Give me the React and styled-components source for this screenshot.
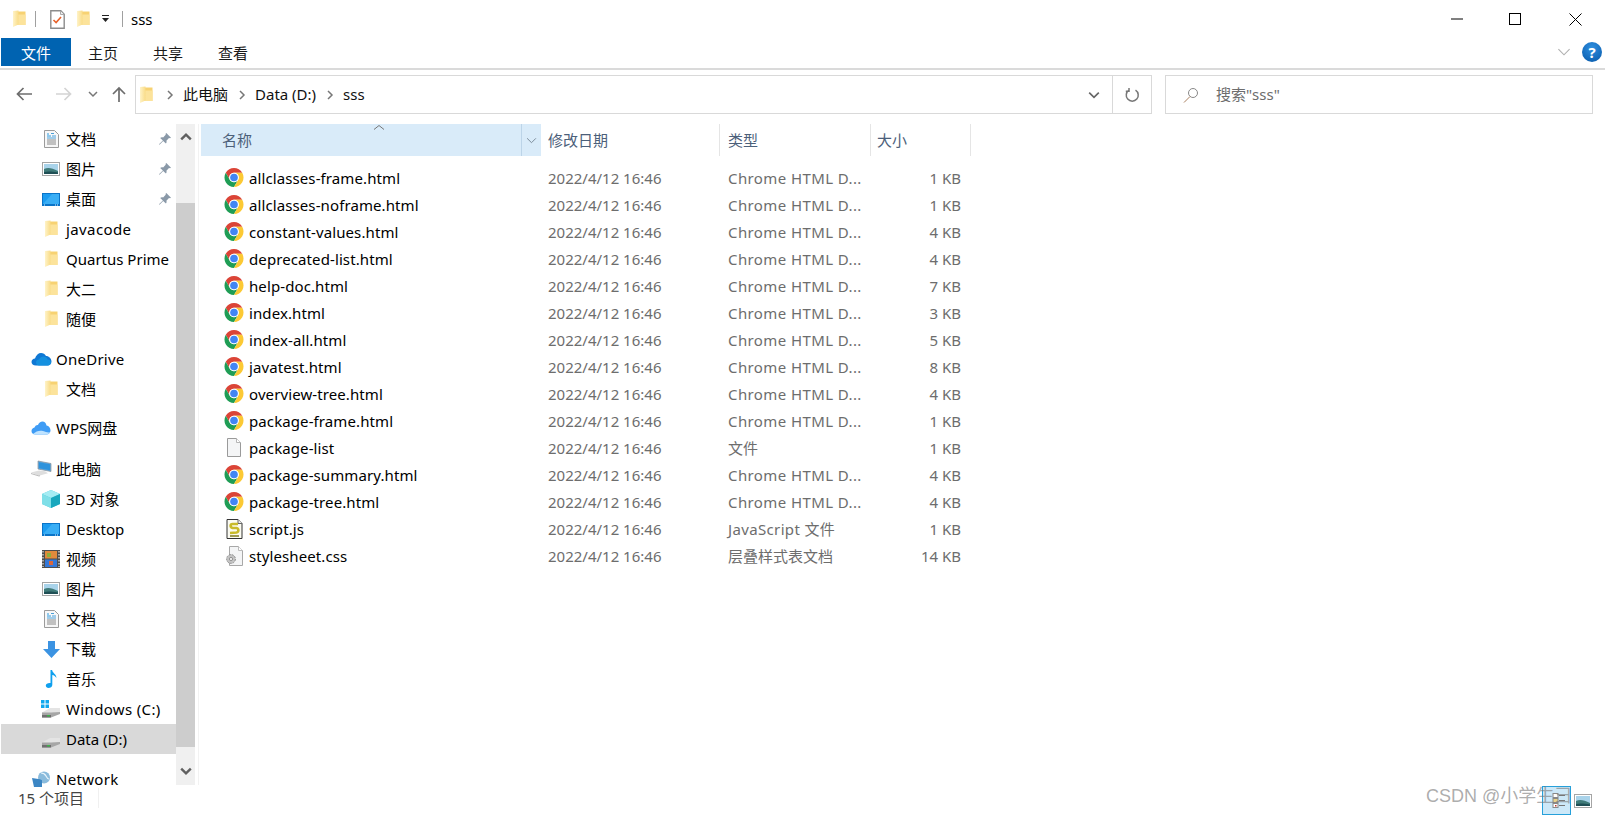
import React from "react";
import styled, { createGlobalStyle } from "styled-components";

const Global = createGlobalStyle`
  html, body { margin: 0; padding: 0; background: #fff; overflow: hidden; }
  * { box-sizing: border-box; }
  body { font-family: "Noto Sans", "Noto Sans CJK SC", sans-serif; font-size: 15px; color: #000; }
`;

const Window = styled.div`
  position: relative;
  width: 1605px;
  height: 815px;
  display: flex;
  flex-direction: column;
  overflow: hidden;
  background: #fff;
`;

const TitleBar = styled.div`
  height: 38px;
  flex: none;
  display: flex;
  align-items: center;
  padding-left: 12px;
`;
const QuickSep = styled.div`
  width: 1px;
  height: 16px;
  background: #a0a0a0;
  margin: 0 ${(p) => p.$r}px 0 ${(p) => p.$l}px;
`;
const QuickSlot = styled.span`
  display: flex;
  margin: 0 ${(p) => p.$r}px 0 ${(p) => p.$l || 0}px;
`;
const TitleText = styled.span`
  font-size: 15px;
  line-height: 20px;
`;
const WinControls = styled.div`
  margin-left: auto;
  display: flex;
  height: 100%;
  align-items: center;
`;
const WinButton = styled.button`
  width: 59px;
  height: 38px;
  padding: 0 ${(p) => p.$nudge || 0}px 0 0;
  border: 0;
  background: none;
  display: flex;
  align-items: center;
  justify-content: center;
`;

const Ribbon = styled.div`
  height: 32px;
  flex: none;
  display: flex;
  align-items: flex-start;
  padding-left: 1px;
  border-bottom: 2px solid #dadada;
`;
const RibbonTab = styled.div`
  height: 28px;
  width: ${(p) => (p.$active ? 70 : 65)}px;
  background: ${(p) => (p.$active ? "#0063b1" : "transparent")};
  color: ${(p) => (p.$active ? "#fff" : "#1a1a1a")};
  padding-left: ${(p) => (p.$active ? 20 : 17)}px;
  line-height: 30px;
  font-size: 15px;
`;
const RibbonRight = styled.div`
  margin-left: auto;
  display: flex;
  align-items: center;
  gap: 11px;
  height: 28px;
  padding-right: 3px;
`;
const HelpBadge = styled.div`
  width: 20px;
  height: 20px;
  border-radius: 50%;
  background: radial-gradient(circle at 50% 30%, #2f8fe0, #0758a8);
  color: #fff;
  font-size: 15px;
  font-weight: 700;
  line-height: 20px;
  text-align: center;
`;

const NavBar = styled.div`
  height: 54px;
  flex: none;
  display: flex;
  align-items: flex-start;
  padding-top: 5px;
`;
const NavButtons = styled.div`
  width: 135px;
  height: 38px;
  flex: none;
  display: flex;
  align-items: center;
  padding-left: 16px;
`;
const NavSlot = styled.span`
  display: flex;
  margin: 0 ${(p) => p.$r || 0}px 0 ${(p) => p.$l || 0}px;
`;
const AddressBox = styled.div`
  width: 1017px;
  height: 39px;
  flex: none;
  border: 1px solid #d9d9d9;
  display: flex;
  align-items: center;
  padding-left: 3px;
`;
const Crumb = styled.span`
  margin: 0 0 2px 8px;
  line-height: 20px;
  color: #111;
`;
const AddressEnd = styled.div`
  margin-left: auto;
  height: 100%;
  display: flex;
  align-items: center;
`;
const RefreshCell = styled.div`
  width: 39px;
  height: 100%;
  margin-left: 12px;
  border-left: 1px solid #d9d9d9;
  display: flex;
  align-items: center;
  justify-content: center;
`;
const SearchBox = styled.div`
  width: 428px;
  height: 39px;
  flex: none;
  margin-left: 13px;
  border: 1px solid #d9d9d9;
  display: flex;
  align-items: center;
  padding-left: 17px;
  gap: 17px;
  color: #6d6d6d;
`;
const SearchText = styled.span`
  margin-bottom: 2px;
  line-height: 20px;
`;

const Main = styled.div`
  flex: 1;
  min-height: 0;
  display: flex;
`;
const NavPane = styled.div`
  width: 175px;
  margin-left: 1px;
  flex: none;
`;
const NavRow = styled.div`
  height: 30px;
  margin-top: ${(p) => p.$gap}px;
  display: flex;
  align-items: center;
  position: relative;
  background: ${(p) => (p.$selected ? "#d9d9d9" : "transparent")};
  color: #000;
  white-space: nowrap;
`;
const NavIcon = styled.span`
  width: 24px;
  height: 24px;
  flex: none;
  margin-left: ${(p) => (p.$level === 1 ? 28 : 38)}px;
  margin-right: 3px;
  display: flex;
  align-items: center;
  justify-content: center;
`;
const NavLabel = styled.span`
  line-height: 20px;
  letter-spacing: ${(p) => p.$spacing || 0}px;
`;
const PinSlot = styled.span`
  position: absolute;
  left: 157px;
  top: 8px;
  display: flex;
`;

const ScrollBar = styled.div`
  width: 19px;
  flex: none;
  background: #f0f0f0;
  display: flex;
  flex-direction: column;
`;
const ScrollButton = styled.div`
  height: ${(p) => p.$h}px;
  flex: none;
  display: flex;
  justify-content: center;
  align-items: ${(p) => (p.$top ? "flex-start" : "flex-end")};
  padding: ${(p) => (p.$top ? "7px 0 0" : "0 0 8px")};
`;
const ScrollThumb = styled.div`
  flex: 1;
  background: #cdcdcd;
`;
const PaneRule = styled.div`
  width: 1px;
  flex: none;
  margin-left: 3px;
  background: #f2f2f2;
`;

const FileArea = styled.div`
  flex: 1;
  min-width: 0;
  padding-left: 2px;
`;
const HeaderRow = styled.div`
  display: flex;
  height: 32px;
`;
const HeaderCell = styled.div`
  width: ${(p) => p.$w}px;
  height: 32px;
  flex: none;
  position: relative;
  padding-left: ${(p) => p.$pad}px;
  line-height: 32px;
  color: #4c607a;
  background: ${(p) => (p.$active ? "#d9ebf9" : "transparent")};
  border-right: 1px solid ${(p) => (p.$active ? "transparent" : "#e5e5e5")};
`;
const SortCaret = styled.span`
  position: absolute;
  left: 170px;
  top: 0;
  display: flex;
`;
const HeaderSplit = styled.div`
  position: absolute;
  left: 320px;
  top: 0;
  bottom: 0;
  width: 20px;
  border-left: 1px solid #bcd4e8;
  display: flex;
  align-items: center;
  justify-content: center;
`;
const FileList = styled.div`
  padding-top: 8px;
`;
const FileRow = styled.div`
  display: flex;
  height: 27px;
  align-items: center;
  white-space: nowrap;
`;
const FileIcon = styled.span`
  width: 20px;
  height: 20px;
  flex: none;
  margin-left: 23px;
  display: flex;
  align-items: center;
  justify-content: center;
`;
const FileName = styled.span`
  width: 299px;
  flex: none;
  margin-left: 5px;
  color: #000;
  letter-spacing: 0.1px;
`;
const FileDate = styled.span`
  width: 180px;
  flex: none;
  color: #6d6d6d;
`;
const FileType = styled.span`
  width: 140px;
  flex: none;
  color: #6d6d6d;
  letter-spacing: ${(p) => p.$spacing}px;
`;
const FileSize = styled.span`
  width: 93px;
  flex: none;
  text-align: right;
  color: #6d6d6d;
`;

const StatusBar = styled.div`
  height: 30px;
  flex: none;
  display: flex;
  align-items: center;
  padding-left: 18px;
  color: #444;
`;
const StatusText = styled.span`
  margin-bottom: 5px;
  line-height: 20px;
`;
const StatusSep = styled.div`
  width: 1px;
  height: 20px;
  background: #f0f0f0;
  margin: 0 0 5px 14px;
`;
const ViewButtons = styled.div`
  margin-left: auto;
  display: flex;
  align-items: center;
  height: 100%;
  padding-right: 10px;
`;
const ViewButton = styled.div`
  width: ${(p) => (p.$active ? 29 : 24)}px;
  height: 29px;
  margin-top: 1px;
  display: flex;
  align-items: center;
  justify-content: center;
  background: ${(p) => (p.$active ? "#cce8f8" : "transparent")};
  border: ${(p) => (p.$active ? "1px solid #26a0da" : "0")};
`;
const Watermark = styled.div`
  position: absolute;
  left: 1426px;
  top: 783px;
  font-family: "Liberation Sans", "Noto Sans CJK SC", sans-serif;
  font-size: 18px;
  line-height: 26px;
  color: rgba(120, 120, 120, 0.62);
  white-space: nowrap;
  pointer-events: none;
`;

/* ---------- drawings ---------- */

const Folder = () => (
  <svg width="14" height="18" viewBox="0 0 14 18">
    <defs>
      <linearGradient id="fb" x1="0" x2="1" y1="0" y2="0">
        <stop offset="0" stopColor="#fff3c8" />
        <stop offset="1" stopColor="#f9dc88" />
      </linearGradient>
    </defs>
    <path d="M4 1.500h9.500V15H4z" fill="#f7d272" />
    <path d="M4 4.500h9.500V15H4z" fill="#fce39b" />
    <path d="M1 1l5.500-.5v14L1 17z" fill="url(#fb)" />
  </svg>
);

const Chrome = () => (
  <svg width="21" height="21" viewBox="3 3 42 42">
    <path d="M6.680 14A20 20 0 0 1 41.320 14H24A10 10 0 0 0 15.340 29z" fill="#db4437" />
    <path d="M6.680 14A20 20 0 0 0 24 44L32.660 29A10 10 0 0 1 15.340 29z" fill="#1f9d55" />
    <path d="M41.320 14A20 20 0 0 1 24 44L32.660 29A10 10 0 0 0 24 14z" fill="#fcc934" />
    <circle cx="24" cy="24" r="10" fill="#fff" />
    <circle cx="24" cy="24" r="8" fill="#4285f4" />
  </svg>
);

const BlankFile = () => (
  <svg width="16" height="19" viewBox="0 0 16 19">
    <path d="M1.500.5h9l4 4v14h-13z" fill="#f4f5f6" stroke="#9a9a9a" />
    <path d="M10.500.5v4h4" fill="#fff" stroke="#b5b5b5" />
  </svg>
);

const ScriptFile = () => (
  <svg width="17" height="20" viewBox="0 0 17 20">
    <path d="M1 .5h11l4 4v15H1z" fill="#fbfbf2" stroke="#333" />
    <path d="M12 .5v4h4" fill="#eee" stroke="#666" />
    <path d="M12 5H6.500C4 5 4 8.500 6.500 9h4c2.500.5 2.500 4 0 4.500L4 14" fill="none" stroke="#c9bb2a" strokeWidth="2.600" />
    <path d="M4 17h9" stroke="#7f7a1e" strokeWidth="1.500" />
  </svg>
);

const CssFile = () => (
  <svg width="19" height="20" viewBox="0 0 19 20">
    <path d="M4.500.5h9l4 4v15h-13z" fill="#f4f5f6" stroke="#a8a8a8" />
    <path d="M13.500.5v4h4" fill="#fff" stroke="#bbb" />
    <circle cx="6" cy="13" r="4.400" fill="#c4c4c4" stroke="#8d8d8d" strokeDasharray="2 1" />
    <circle cx="6" cy="13" r="1.600" fill="#f2f2f2" stroke="#777" strokeWidth="0.700" />
  </svg>
);

const DocCheck = () => (
  <svg width="15" height="19" viewBox="0 0 15 19">
    <path d="M.8.8h10l3.400 3.400v14H.8z" fill="#fff" stroke="#8c8c8c" strokeWidth="1.400" />
    <path d="M10.500 1v3.500H14" fill="#eee" stroke="#aaa" />
    <path d="M3.500 10l2.600 2.600L11 7" fill="none" stroke="#e8622a" strokeWidth="1.600" />
  </svg>
);

const DocIcon = () => (
  <svg width="15" height="18" viewBox="0 0 15 18">
    <path d="M.5.5h10l4 4v13H.5z" fill="#f7f7f7" stroke="#9b9b9b" />
    <path d="M3 4h2M3 6h4" stroke="#2a9ae0" />
    <path d="M7 3.500h3M8 6h4M3 8h9" stroke="#4a9fd8" />
    <path d="M3 10h9M3 12h9M3 14h9" stroke="#8a8a8a" />
  </svg>
);

const PicIcon = () => (
  <svg width="18" height="14" viewBox="0 0 18 14">
    <rect x=".5" y=".5" width="17" height="13" fill="#fff" stroke="#a5a5a5" />
    <rect x="2" y="2" width="14" height="10" fill="#a9d3ea" />
    <path d="M2 7c4-2 8-1 14 2v3H2z" fill="#3f7a78" />
    <path d="M2 10c4-1 8-.5 14 .5V12H2z" fill="#1f4f55" />
  </svg>
);

const DesktopIcon = () => (
  <svg width="18" height="13" viewBox="0 0 18 13">
    <rect width="18" height="13" fill="#0a74c8" />
    <rect x="1" y="1" width="16" height="10" fill="#1c9cf0" />
    <path d="M1 11L10 1h7v10z" fill="#3aaef5" />
    <path d="M2 12h1M13 12h1M15 12h1" stroke="#d9efff" />
  </svg>
);

const CubeIcon = () => (
  <svg width="18" height="18" viewBox="0 0 18 18">
    <path d="M9 0l9 4v10l-9 4-9-4V4z" fill="#49c9dc" />
    <path d="M9 0l9 4-9 4-9-4z" fill="#a5ecf3" />
    <path d="M9 8l9-4v10l-9 4z" fill="#18a7bd" />
    <path d="M0 4l9 4v10l-9-4z" fill="#7fdfe8" />
  </svg>
);

const FilmIcon = () => (
  <svg width="18" height="18" viewBox="0 0 18 18">
    <rect width="18" height="18" fill="#4d4d4d" />
    <path d="M1 1v16M17 1v16" stroke="#cfcfcf" strokeWidth="1.400" strokeDasharray="1.500 1.500" />
    <rect x="3" y="1" width="12" height="7.500" fill="#e08a3c" />
    <rect x="5" y="3" width="4" height="4" fill="#8fae3a" />
    <rect x="3" y="9.500" width="12" height="7.500" fill="#3478d8" />
    <rect x="7" y="11" width="4" height="4" fill="#d8663c" />
  </svg>
);

const DownIcon = () => (
  <svg width="17" height="17" viewBox="0 0 17 17">
    <path d="M5 0h7v8h5l-8.500 9L0 8h5z" fill="#3b93e2" />
  </svg>
);

const MusicIcon = () => (
  <svg width="12" height="18" viewBox="0 0 12 18">
    <path d="M5.500 0h1.600c.3 3 4.400 4.200 4.400 8-1-1.600-2.500-2.800-4.200-3v10c0 2-2 3-3.800 3C2 18 .8 17 .8 15.500S2.800 12.700 5.500 13z" fill="#10a0ee" />
  </svg>
);

const Drive = ({ win }) => (
  <svg width="20" height="18" viewBox="0 0 20 18">
    {win && (
      <g fill="#10a8ee">
        <rect x="0" y="0" width="3.500" height="3.500" />
        <rect x="4.500" y="0" width="3.500" height="3.500" />
        <rect x="0" y="4.500" width="3.500" height="3.500" />
        <rect x="4.500" y="4.500" width="3.500" height="3.500" />
      </g>
    )}
    <path d="M1 12.500L9 8h10v4l-9 2H1z" fill="#e4e4e4" />
    <path d="M1 12.500h9l9-.5v2l-9 3.500H1z" fill="#a6a6a6" />
    <path d="M1 15h9v2.500H1z" fill="#6f6f6f" />
    <rect x="6" y="15" width="3" height="1.500" fill="#3fb24a" />
  </svg>
);

const OneDriveIcon = () => (
  <svg width="21" height="14" viewBox="0 0 21 14">
    <path d="M5 13.500C2 13.500.5 11.800.5 10c0-2 1.800-3.500 3.500-3.500C5 3 7.500 1 10 1c2.300 0 4 1 5 3 3 0 5.500 2.500 5.500 5.500 0 2.500-2 4-4 4z" fill="#0f78d4" />
    <path d="M8 13.500c-2 0-3-1.500-3-3 0-1.800 1.400-3 3-3 1-2 2.500-3 4.500-3s3.500 1 4 3c2 0 3.500 1.200 3.500 3 0 1.500-1.500 3-3 3z" fill="#1490df" />
  </svg>
);

const WpsIcon = () => (
  <svg width="20" height="14" viewBox="0 0 20 14">
    <path d="M4.500 13.500C2 13.500.5 12 .5 10c0-1.800 1.300-3.200 3-3.500C4.200 4.500 5.800 3.800 7 4c.8-2 2.500-3.500 4.500-3.500S15 2 15.500 4.500c2.500.3 4 2.600 4 5 0 2.300-1.700 4-4 4z" fill="#3f9cf5" />
    <path d="M2 13c3-3 7-4 10-3 3 .8 5 2 7 1-.8 1.500-2 2.500-3.500 2.500H4.500z" fill="#bfe3ff" />
  </svg>
);

const PcIcon = () => (
  <svg width="21" height="18" viewBox="0 0 21 18">
    <path d="M7 1l13 2.500v8L7 9z" fill="#5fa8de" stroke="#8a8f96" strokeWidth=".7" />
    <path d="M8 2.200l11 2v6L8 8.300z" fill="#2f93dc" />
    <path d="M0 12.500l8-2 6 .8 3 2-9 2.500z" fill="#dedede" />
    <path d="M0 13.500L8 16l1-.3" stroke="#bbb" fill="none" />
  </svg>
);

const NetworkIcon = () => (
  <svg width="19" height="16" viewBox="0 0 19 16">
    <circle cx="12" cy="6.500" r="6" fill="#8abbdc" />
    <path d="M9 2c2 0 4 1 5 3s2 3 3 3" stroke="#e9f4fb" fill="none" strokeWidth="1.200" />
    <path d="M0 7l8 1.200 2 1V16H2z" fill="#3c86c4" />
  </svg>
);

const Pin = () => (
  <svg width="14" height="14" viewBox="0 0 14 14">
    <path d="M8.300 1l4.700 4.700-1 .6-1-.2-2.600 2.600c.4 1.200.1 2.200-.5 2.900L5.200 8.900 1.500 12.800 1 12.300l3.900-3.800-2.700-2.600c.7-.7 1.800-.9 2.900-.5l2.600-2.600-.1-1z" fill="#8a99a8" />
  </svg>
);

const Chevron = ({ dir = "down", size = 10, color = "#555", sw = 1.5 }) => {
  const d = {
    down: "M1 3l4 4 4-4",
    up: "M1 7l4-4 4 4",
    right: "M3 1l4 4-4 4",
  }[dir];
  return (
    <svg width={size} height={size} viewBox="0 0 10 10">
      <path d={d} fill="none" stroke={color} strokeWidth={sw} />
    </svg>
  );
};

const Arrow = ({ dir, color }) => {
  const d = {
    left: "M16 8H1.500M7.500 2L1.500 8l6 6",
    right: "M0 8h14.500M8.500 2l6 6-6 6",
  }[dir];
  return (
    <svg width="16" height="16" viewBox="0 0 16 16">
      <path d={d} fill="none" stroke={color} strokeWidth="1.700" />
    </svg>
  );
};

const navItems = [
  { label: "文档", icon: <DocIcon />, level: 2, pin: true },
  { label: "图片", icon: <PicIcon />, level: 2, pin: true },
  { label: "桌面", icon: <DesktopIcon />, level: 2, pin: true },
  { label: "javacode", icon: <Folder />, level: 2, spacing: 0.4 },
  { label: "Quartus Prime", icon: <Folder />, level: 2 },
  { label: "大二", icon: <Folder />, level: 2 },
  { label: "随便", icon: <Folder />, level: 2 },
  { label: "OneDrive", icon: <OneDriveIcon />, level: 1, gap: 10, spacing: 0.25 },
  { label: "文档", icon: <Folder />, level: 2 },
  { label: "WPS网盘", icon: <WpsIcon />, level: 1, gap: 9 },
  { label: "此电脑", icon: <PcIcon />, level: 1, gap: 11 },
  { label: "3D 对象", icon: <CubeIcon />, level: 2 },
  { label: "Desktop", icon: <DesktopIcon />, level: 2 },
  { label: "视频", icon: <FilmIcon />, level: 2 },
  { label: "图片", icon: <PicIcon />, level: 2 },
  { label: "文档", icon: <DocIcon />, level: 2 },
  { label: "下载", icon: <DownIcon />, level: 2 },
  { label: "音乐", icon: <MusicIcon />, level: 2 },
  { label: "Windows (C:)", icon: <Drive win />, level: 2, spacing: 0.35 },
  { label: "Data (D:)", icon: <Drive />, level: 2, selected: true },
  { label: "Network", icon: <NetworkIcon />, level: 1, gap: 10, spacing: 0.3 },
];

const chromeType = "Chrome HTML D...";
const files = [
  ["allclasses-frame.html", <Chrome />, chromeType, "1 KB", 0.4],
  ["allclasses-noframe.html", <Chrome />, chromeType, "1 KB", 0.4],
  ["constant-values.html", <Chrome />, chromeType, "4 KB", 0.4],
  ["deprecated-list.html", <Chrome />, chromeType, "4 KB", 0.4],
  ["help-doc.html", <Chrome />, chromeType, "7 KB", 0.4],
  ["index.html", <Chrome />, chromeType, "3 KB", 0.4],
  ["index-all.html", <Chrome />, chromeType, "5 KB", 0.4],
  ["javatest.html", <Chrome />, chromeType, "8 KB", 0.4],
  ["overview-tree.html", <Chrome />, chromeType, "4 KB", 0.4],
  ["package-frame.html", <Chrome />, chromeType, "1 KB", 0.4],
  ["package-list", <BlankFile />, "文件", "1 KB", 0],
  ["package-summary.html", <Chrome />, chromeType, "4 KB", 0.4],
  ["package-tree.html", <Chrome />, chromeType, "4 KB", 0.4],
  ["script.js", <ScriptFile />, "JavaScript 文件", "1 KB", 0.35],
  ["stylesheet.css", <CssFile />, "层叠样式表文档", "14 KB", 0],
];

export default function App() {
  return (
    <Window>
      <Global />
      <TitleBar>
        <Folder />
        <QuickSep $l={9} $r={14} />
        <QuickSlot $r={11}>
          <DocCheck />
        </QuickSlot>
        <Folder />
        <QuickSlot $l={11} $r={0}>
          <svg width="9" height="8" viewBox="0 0 9 8">
            <path d="M1 .5h7" stroke="#222" />
            <path d="M1 3h7L4.500 7z" fill="#222" />
          </svg>
        </QuickSlot>
        <QuickSep $l={12} $r={8} />
        <TitleText>sss</TitleText>
        <WinControls>
          <WinButton aria-label="minimize" $nudge={2}>
            <svg width="12" height="2"><path d="M0 1h12" stroke="#000" /></svg>
          </WinButton>
          <WinButton aria-label="maximize" $nudge={4}>
            <svg width="12" height="12"><rect x=".5" y=".5" width="11" height="11" fill="none" stroke="#000" /></svg>
          </WinButton>
          <WinButton aria-label="close">
            <svg width="13" height="13"><path d="M.5.500l12 12M12.500.500l-12 12" stroke="#000" /></svg>
          </WinButton>
        </WinControls>
      </TitleBar>

      <Ribbon>
        <RibbonTab $active>文件</RibbonTab>
        <RibbonTab>主页</RibbonTab>
        <RibbonTab>共享</RibbonTab>
        <RibbonTab>查看</RibbonTab>
        <RibbonRight>
          <Chevron dir="down" size={14} color="#b0b0b0" sw={0.8} />
          <HelpBadge>?</HelpBadge>
        </RibbonRight>
      </Ribbon>

      <NavBar>
        <NavButtons>
          <NavSlot $r={24}><Arrow dir="left" color="#6d6d6d" /></NavSlot>
          <NavSlot $r={16}><Arrow dir="right" color="#d4d4d4" /></NavSlot>
          <NavSlot $r={14}><Chevron dir="down" color="#777" /></NavSlot>
          <NavSlot>
            <svg width="14" height="16" viewBox="0 0 14 16">
              <path d="M7 16V2M1 8l6-6 6 6" fill="none" stroke="#6d6d6d" strokeWidth="1.700" />
            </svg>
          </NavSlot>
        </NavButtons>
        <AddressBox>
          <Folder />
          <NavSlot $l={12}><Chevron dir="right" color="#777" /></NavSlot>
          <Crumb>此电脑</Crumb>
          <NavSlot $l={9}><Chevron dir="right" color="#777" /></NavSlot>
          <Crumb>Data (D:)</Crumb>
          <NavSlot $l={9}><Chevron dir="right" color="#777" /></NavSlot>
          <Crumb>sss</Crumb>
          <AddressEnd>
            <Chevron dir="down" size={12} color="#666" sw={1.4} />
            <RefreshCell>
              <svg width="16" height="16" viewBox="0 0 16 16">
                <path d="M5 2.600a6 6 0 1 0 6.500 0M5 .5v3.200H1.800" fill="none" stroke="#777" strokeWidth="1.500" transform="translate(0 .5)" />
              </svg>
            </RefreshCell>
          </AddressEnd>
        </AddressBox>
        <SearchBox>
          <svg width="16" height="16" viewBox="0 0 16 16">
            <circle cx="10" cy="6" r="4.500" fill="none" stroke="#888" />
            <path d="M7 9.500L1 15.500" stroke="#a97f5e" />
          </svg>
          <SearchText>搜索"sss"</SearchText>
        </SearchBox>
      </NavBar>

      <Main>
        <NavPane>
          {navItems.map((item, i) => (
            <NavRow key={i} $gap={item.gap || 0} $selected={item.selected}>
              <NavIcon $level={item.level}>{item.icon}</NavIcon>
              <NavLabel $spacing={item.spacing}>{item.label}</NavLabel>
              {item.pin && (
                <PinSlot><Pin /></PinSlot>
              )}
            </NavRow>
          ))}
        </NavPane>
        <ScrollBar>
          <ScrollButton $h={79} $top><Chevron dir="up" size={12} color="#606060" sw={2} /></ScrollButton>
          <ScrollThumb />
          <ScrollButton $h={38}><Chevron dir="down" size={12} color="#606060" sw={2} /></ScrollButton>
        </ScrollBar>
        <PaneRule />
        <FileArea>
          <HeaderRow>
            <HeaderCell $active $w={340} $pad={21}>
              名称
              <SortCaret>
                <svg width="16" height="7" viewBox="0 0 16 7"><path d="M3 5.500l5-4 5 4" fill="none" stroke="#777" /></svg>
              </SortCaret>
              <HeaderSplit>
                <Chevron dir="down" size={11} color="#7a8b99" sw={0.9} />
              </HeaderSplit>
            </HeaderCell>
            <HeaderCell $w={179} $pad={7}>修改日期</HeaderCell>
            <HeaderCell $w={151} $pad={8}>类型</HeaderCell>
            <HeaderCell $w={100} $pad={6}>大小</HeaderCell>
          </HeaderRow>
          <FileList>
            {files.map(([name, icon, type, size, spacing]) => (
              <FileRow key={name}>
                <FileIcon>{icon}</FileIcon>
                <FileName>{name}</FileName>
                <FileDate>2022/4/12 16:46</FileDate>
                <FileType $spacing={spacing}>{type}</FileType>
                <FileSize>{size}</FileSize>
              </FileRow>
            ))}
          </FileList>
        </FileArea>
      </Main>

      <StatusBar>
        <StatusText>15 个项目</StatusText>
        <StatusSep />
        <ViewButtons>
          <ViewButton $active>
            <svg width="18" height="16" viewBox="0 0 18 16">
              <rect x="5" y="0.500" width="5" height="4" fill="#fff" stroke="#888" />
              <rect x="5" y="5.500" width="5" height="4" fill="#e8d28a" stroke="#888" />
              <rect x="5" y="10.500" width="5" height="4" fill="#fff" stroke="#888" />
              <rect x="7" y="12" width="1.500" height="1.500" fill="#c0392b" />
              <path d="M11 2.500h6M11 7.500h6M11 12.500h6" stroke="#777" />
            </svg>
          </ViewButton>
          <ViewButton>
            <PicIcon />
          </ViewButton>
        </ViewButtons>
      </StatusBar>
      <Watermark>CSDN @小学生彐</Watermark>
    </Window>
  );
}
